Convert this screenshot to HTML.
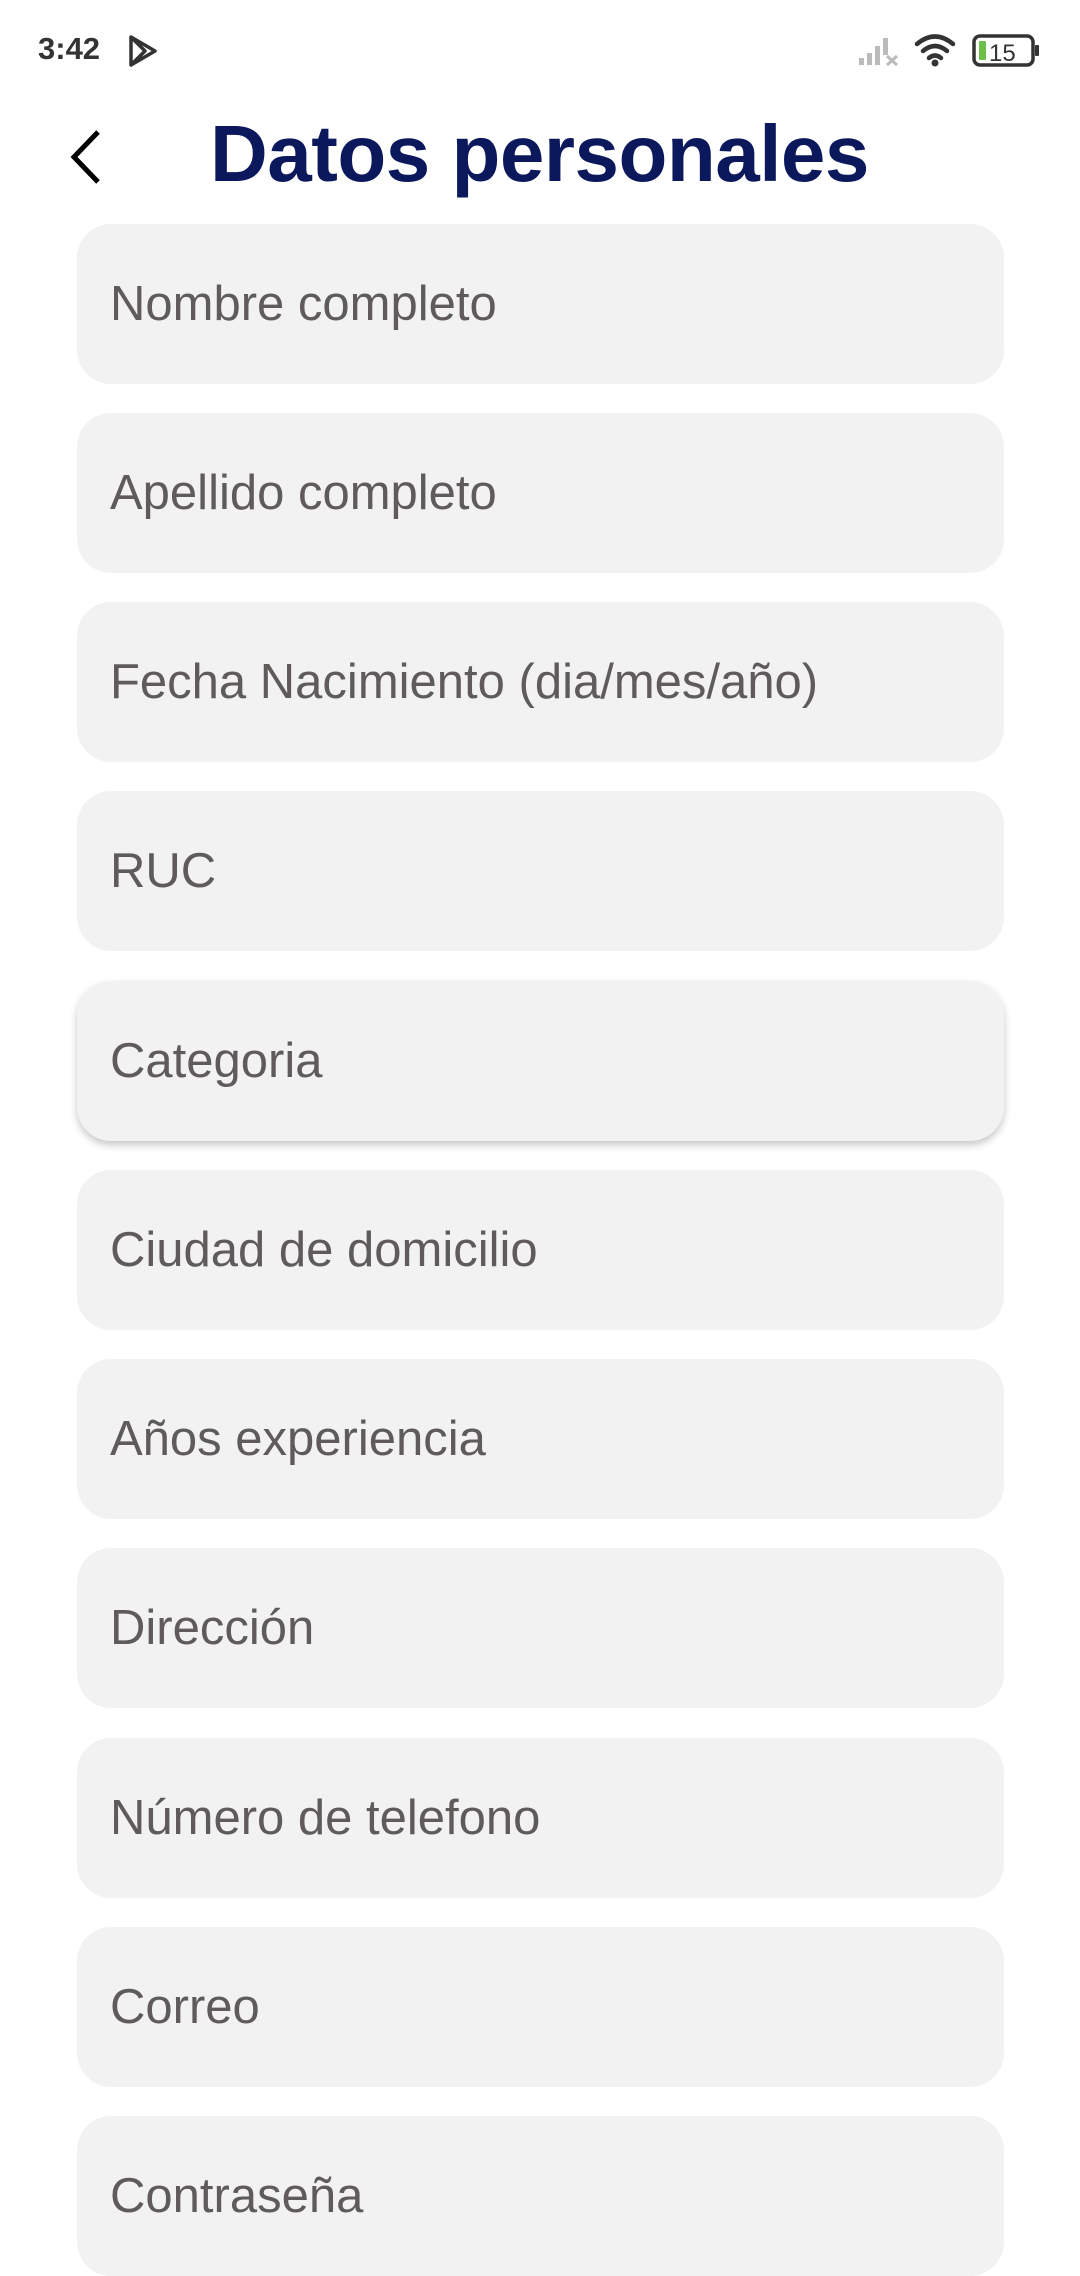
<!DOCTYPE html>
<html><head><meta charset="utf-8"><style>
*{margin:0;padding:0;box-sizing:border-box}
body{width:1080px;height:2248px;background:#fff;font-family:"Liberation Sans",sans-serif;position:relative;overflow:hidden}
.t{position:absolute;left:38px;top:31px;font-size:31px;font-weight:bold;color:#333}
.f{position:absolute;left:77px;width:927px;height:160px;background:#f2f2f2;border-radius:34px;color:#5f5b5b;font-size:49px;padding-left:33px;line-height:160px}
.h{position:absolute;left:210px;top:106px;font-size:80px;font-weight:bold;color:#0b185c;letter-spacing:-0.5px;line-height:96px}
</style></head><body>
<div class="t">3:42</div>
<svg style="position:absolute;left:127px;top:34px" width="32" height="34" viewBox="0 0 32 34"><path d="M4 3 L28 17 L4 31 Z M4 3 L18 17 L4 31 M11 10 L18 17" fill="none" stroke="#333" stroke-width="3.5" stroke-linejoin="round"/></svg>
<svg style="position:absolute;left:857px;top:36px" width="44" height="30" viewBox="0 0 44 30"><g fill="#bbb"><rect x="2" y="22" width="5" height="7"/><rect x="10" y="17" width="5" height="12"/><rect x="18" y="10" width="5" height="19"/><rect x="26" y="2" width="5" height="17"/></g><path d="M30 20 L40 29 M40 20 L30 29" stroke="#bbb" stroke-width="3"/></svg>
<svg style="position:absolute;left:913px;top:32px" width="46" height="38" viewBox="0 0 46 38"><g fill="none" stroke="#333" stroke-width="4.5" stroke-linecap="round"><path d="M4 12 Q22 -3 40 12"/><path d="M10 19 Q22 9 34 19"/><path d="M16 26 Q22 21 28 26"/></g><circle cx="22" cy="31" r="3.5" fill="#333"/></svg>
<svg style="position:absolute;left:972px;top:34px" width="70" height="34" viewBox="0 0 70 34"><rect x="2" y="2" width="59" height="29" rx="6" fill="none" stroke="#333" stroke-width="3.5"/><rect x="63" y="11" width="4" height="11" rx="1" fill="#333"/><rect x="7" y="7" width="7" height="19" rx="1" fill="#6cc04a"/><text x="17" y="27" font-family="Liberation Sans" font-size="24" fill="#333">15</text></svg>
<svg style="position:absolute;left:66px;top:128px" width="40" height="58" viewBox="0 0 40 58"><path d="M32 4 L8 29 L32 54" fill="none" stroke="#000" stroke-width="5"/></svg>
<div class="h">Datos personales</div>
<div class="f" style="top:224px">Nombre completo</div>
<div class="f" style="top:413px">Apellido completo</div>
<div class="f" style="top:602px">Fecha Nacimiento (dia/mes/año)</div>
<div class="f" style="top:791px">RUC</div>
<div class="f" style="top:981px;box-shadow:0 4px 8px rgba(0,0,0,0.22)">Categoria</div>
<div class="f" style="top:1170px">Ciudad de domicilio</div>
<div class="f" style="top:1359px">Años experiencia</div>
<div class="f" style="top:1548px">Dirección</div>
<div class="f" style="top:1738px">Número de telefono</div>
<div class="f" style="top:1927px">Correo</div>
<div class="f" style="top:2116px">Contraseña</div>
</body></html>
